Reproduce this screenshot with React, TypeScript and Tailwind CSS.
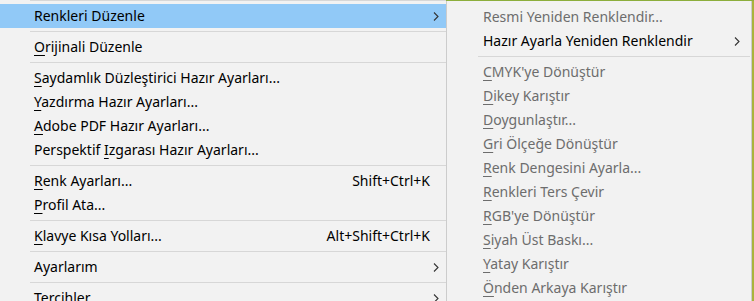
type Item =
  | { sep: true; first?: boolean }
  | {
      sep?: false
      label: string
      key?: number
      shortcut?: string
      arrow?: boolean
      active?: boolean
      disabled?: boolean
    }

const mainItems: Item[] = [
  { sep: true, first: true },
  { label: "Renkleri Düzenle", arrow: true, active: true },
  { sep: true },
  { label: "Orijinali Düzenle", key: 0 },
  { sep: true },
  { label: "Saydamlık Düzleştirici Hazır Ayarları...", key: 0 },
  { label: "Yazdırma Hazır Ayarları...", key: 0 },
  { label: "Adobe PDF Hazır Ayarları...", key: 0 },
  { label: "Perspektif Izgarası Hazır Ayarları...", key: 11 },
  { sep: true },
  { label: "Renk Ayarları...", key: 0, shortcut: "Shift+Ctrl+K" },
  { label: "Profil Ata...", key: 0 },
  { sep: true },
  { label: "Klavye Kısa Yolları...", key: 0, shortcut: "Alt+Shift+Ctrl+K" },
  { sep: true },
  { label: "Ayarlarım", arrow: true },
  { sep: true },
  { label: "Tercihler", arrow: true },
]

const subItems: Item[] = [
  { label: "Resmi Yeniden Renklendir...", disabled: true },
  { label: "Hazır Ayarla Yeniden Renklendir", arrow: true },
  { sep: true },
  { label: "CMYK'ye Dönüştür", key: 0, disabled: true },
  { label: "Dikey Karıştır", key: 0, disabled: true },
  { label: "Doygunlaştır...", key: 0, disabled: true },
  { label: "Gri Ölçeğe Dönüştür", key: 0, disabled: true },
  { label: "Renk Dengesini Ayarla...", key: 0, disabled: true },
  { label: "Renkleri Ters Çevir", key: 0, disabled: true },
  { label: "RGB'ye Dönüştür", key: 0, disabled: true },
  { label: "Siyah Üst Baskı...", key: 0, disabled: true },
  { label: "Yatay Karıştır", key: 0, disabled: true },
  { label: "Önden Arkaya Karıştır", key: 0, disabled: true },
]

const Chevron = () => (
  <svg width="6" height="9" viewBox="0 0 6 9" className="shrink-0">
    <path d="M1 0.5 L5 4.5 L1 8.5" fill="none" stroke="#333" strokeWidth="1.1" />
  </svg>
)

const Label = ({ label, k }: { label: string; k?: number }) => {
  if (k === undefined) return <span>{label}</span>
  return (
    <span>
      {label.slice(0, k)}
      <span className="underline decoration-1 underline-offset-[3px]">{label[k]}</span>
      {label.slice(k + 1)}
    </span>
  )
}

const MenuRow = ({ item, sub }: { item: Item; sub?: boolean }) => {
  if (item.sep) {
    return (
      <div
        className={`${item.first ? "pb-[3px]" : "py-[3px]"} ${
          sub ? "pl-[31px] pr-[1px]" : "pl-[30px]"
        }`}
      >
        <div className="h-px bg-[#d7d7d7]" />
      </div>
    )
  }
  return (
    <div
      className={`flex h-6 items-center ${sub ? "pl-[36px] pr-[11px]" : "pl-[34px] pr-[7px]"} ${
        item.active ? "bg-[#91c9f7]" : ""
      } ${item.disabled ? "text-[#6d6d6d]" : "text-[#000]"}`}
    >
      <Label label={item.label} k={item.key} />
      <div className="flex-1" />
      {item.shortcut && <span className="mr-[9px]">{item.shortcut}</span>}
      {item.arrow && <Chevron />}
    </div>
  )
}

export default function App() {
  return (
    <div className="flex h-[301px] w-[754px] overflow-hidden bg-[#f2f2f2] font-['Noto_Sans',sans-serif] text-[14px] leading-none">
      <div className="w-[446px] shrink-0">
        {mainItems.map((it, i) => (
          <MenuRow key={i} item={it} />
        ))}
      </div>
      <div className="flex flex-1 flex-col">
        <div className="h-px bg-[#8cae3c]" />
        <div className="flex flex-1">
          <div className="flex-1 border-x border-[#cccccc] pt-[4px]">
            {subItems.map((it, i) => (
              <MenuRow key={i} item={it} sub />
            ))}
          </div>
          <div className="w-[2px] bg-[#a9b43c]" />
        </div>
      </div>
    </div>
  )
}
